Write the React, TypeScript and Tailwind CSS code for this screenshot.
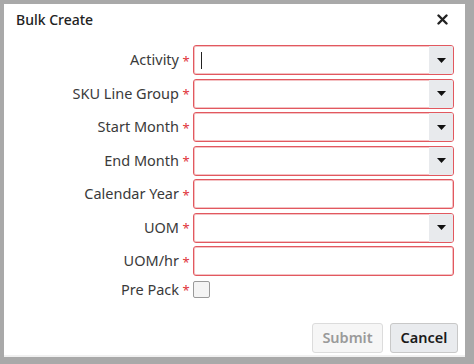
import React from 'react';

type Field = {
  label: string;
  kind: 'select' | 'text' | 'check';
  caret?: boolean;
};

const fields: Field[] = [
  {label: 'Activity', kind: 'select', caret: true},
  {label: 'SKU Line Group', kind: 'select'},
  {label: 'Start Month', kind: 'select'},
  {label: 'End Month', kind: 'select'},
  {label: 'Calendar Year', kind: 'text'},
  {label: 'UOM', kind: 'select'},
  {label: 'UOM/hr', kind: 'text'},
];

const Arrow = () => (
  <svg width="9" height="5" viewBox="0 0 9 5">
    <path d="M0 0 L9 0 L4.5 5 Z" fill="#111" />
  </svg>
);

const Input = ({field}: {field: Field}) => (
  <div className="flex-1 h-[30px] flex rounded-[3px] border border-[#e2585f] shadow-[inset_0_0_0_1px_#f4c2c4] bg-white overflow-hidden">
    <div className="flex-1 flex items-center pl-[7px]">
      {field.caret && <span className="block w-px h-[17px] bg-[#222]" />}
    </div>
    {field.kind === 'select' && (
      <div className="w-[24px] flex items-center justify-center bg-[#e8eaed]">
        <Arrow />
      </div>
    )}
  </div>
);

const Label = ({text}: {text: string}) => (
  <>
    <div className="w-[175px] text-right text-[14.5px] text-[#3a3a3a]">{text}</div>
    <div className="w-[14px] text-center text-[13px] text-[#e0333b] leading-none pt-[2px]">*</div>
  </>
);

export default function App() {
  return (
    <div
      className="w-[474px] h-[364px] bg-[#a9a9a9] pt-[4px] pl-[4px] pr-[9px] pb-[7px]"
      style={{fontFamily: '"Noto Sans", "Open Sans", sans-serif'}}
    >
      <div className="w-full h-full bg-white flex flex-col border-b-2 border-[#f0f0f0]">
        <div className="h-[31px] flex items-center justify-between pl-[12px] pr-[17px]">
          <span className="text-[14px] font-medium text-[#222]">Bulk Create</span>
          <svg width="11" height="11" viewBox="0 0 11 11">
            <path d="M1.5 1.5 L9.5 9.5 M9.5 1.5 L1.5 9.5" stroke="#222" strokeWidth="2.4" strokeLinecap="round" />
          </svg>
        </div>
        <div className="flex flex-col gap-[3.5px] pt-[10px] pr-[11px]">
          {fields.map(f => (
            <div key={f.label} className="flex items-center">
              <Label text={f.label} />
              <Input field={f} />
            </div>
          ))}
          <div className="flex items-center mt-[-1px]">
            <Label text="Pre Pack" />
            <div className="w-[17px] h-[17px] rounded-[2px] border border-[#9a9a9a] bg-[#f4f4f4]" />
          </div>
        </div>
        <div className="flex-1" />
        <div className="flex justify-end gap-[7px] pr-[7px] pb-[2px]">
          <button className="h-[30px] w-[71px] rounded-[3px] border border-[#dcdcdc] bg-[#f6f6f6] text-[14.5px] font-semibold text-[#9a9a9a]">
            Submit
          </button>
          <button className="h-[30px] w-[68px] rounded-[3px] border border-[#c8c8c8] bg-[#e9ebee] text-[14.5px] font-semibold text-[#1a1a1a]">
            Cancel
          </button>
        </div>
      </div>
    </div>
  );
}
